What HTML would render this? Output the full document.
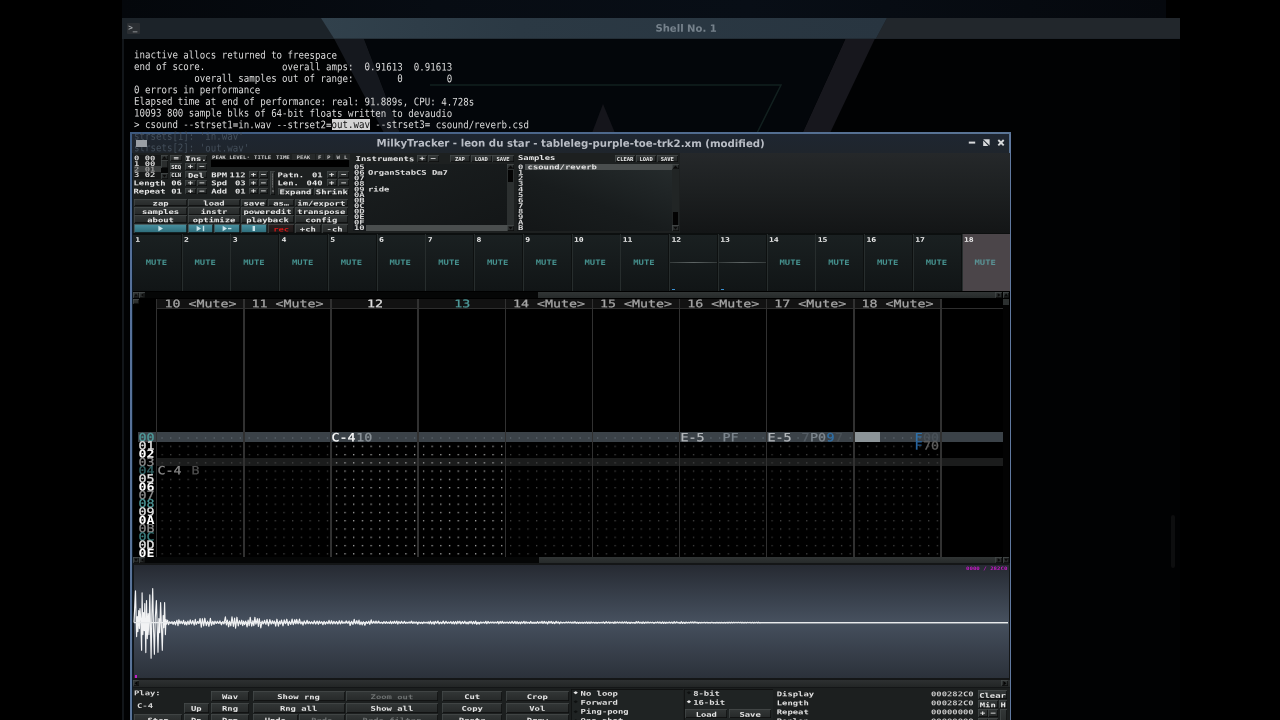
<!DOCTYPE html>
<html><head><meta charset="utf-8"><title>MilkyTracker</title>
<style>
html,body{margin:0;padding:0;background:#000;}
body{width:1280px;height:720px;position:relative;overflow:hidden;font-family:"DejaVu Sans Mono","Liberation Mono",monospace;}
#r{will-change:transform;position:absolute;left:0;top:0;width:1280px;height:720px;}
#r div,#r span,#r svg{position:absolute;}
#r span{left:0;top:0;white-space:pre;transform-origin:0 0;font-size:20px;line-height:20px;}
.m{font-family:"DejaVu Sans Mono","Liberation Mono",monospace;font-weight:normal;}
.b{font-family:"DejaVu Sans Mono","Liberation Mono",monospace;font-weight:bold;}
.p{font-family:"DejaVu Sans Mono","Liberation Mono",monospace;font-weight:normal;-webkit-text-stroke:0.45px;}
.s{font-family:"DejaVu Sans","Liberation Sans",sans-serif;font-weight:bold;}
</style></head><body><div id="r">
<div style="left:122.00px;top:0.00px;width:1044.00px;height:18.00px;background:linear-gradient(90deg,#04070b,#070c13 30%,#080e16 60%,#05080d);"></div>
<div style="left:122.00px;top:38.00px;width:1058.00px;height:682.00px;background:#010203;"></div>
<div style="left:122.00px;top:38.00px;width:1.50px;height:682.00px;background:#12161a;"></div>
<svg style="left:0;top:0" width="1280" height="720" viewBox="0 0 1280 720"><polygon points="334,38.5 364,38.5 400,133 384,133" fill="#15181e"/><polygon points="845.5,38.5 875,38.5 830,133 802.5,133" fill="#17171d"/><polygon points="364,38.5 845.5,38.5 802.5,133 400,133" fill="#03060a"/><polyline points="430,85 781,85 757,133" fill="none" stroke="#12201f" stroke-width="1.5"/><polygon points="603,104 592,133 615,133" fill="#15151b"/></svg>
<div style="left:1170.50px;top:515.00px;width:4.00px;height:53.00px;background:#0d0e0f;border-radius:2px;"></div>
<div style="left:122.00px;top:18.00px;width:1058.00px;height:20.50px;background:#1c2329;"></div>
<svg style="left:0;top:0" width="1280" height="720" viewBox="0 0 1280 720"><defs><linearGradient id="tg" x1="0" x2="1" y1="0" y2="0"><stop offset="0" stop-color="#31414c"/><stop offset="0.35" stop-color="#2b3944"/><stop offset="1" stop-color="#283540"/></linearGradient></defs><polygon points="321,18 887,18 876,38.5 334,38.5" fill="url(#tg)"/><polygon points="876,38.5 887,18 1180,18 1180,38.5" fill="#22272c"/></svg>
<div style="left:127.00px;top:23.00px;width:12.70px;height:10.50px;background:#2b2f33;border-radius:1px;"></div>
<span class="b" style="color:#a0a4a8;transform:translate(128.20px,23.37px) scale(0.3821,0.4115) rotate(0.1deg);">&gt;_</span>
<span class="s" style="transform:translate(655.5px,21.6px) rotate(0.1deg);color:#76828c;font-size:10.05px;line-height:14px;">Shell No. 1</span>
<span class="m" style="color:#dcdcdc;transform:translate(134.00px,49.42px) scale(0.4556,0.5213) rotate(0.1deg);">inactive allocs returned to freespace</span>
<span class="m" style="color:#dcdcdc;transform:translate(134.00px,61.04px) scale(0.4556,0.5213) rotate(0.1deg);">end of score.              overall amps:  0.91613  0.91613</span>
<span class="m" style="color:#dcdcdc;transform:translate(134.00px,72.66px) scale(0.4556,0.5213) rotate(0.1deg);">           overall samples out of range:        0        0</span>
<span class="m" style="color:#dcdcdc;transform:translate(134.00px,84.28px) scale(0.4556,0.5213) rotate(0.1deg);">0 errors in performance</span>
<span class="m" style="color:#dcdcdc;transform:translate(134.00px,95.90px) scale(0.4556,0.5213) rotate(0.1deg);">Elapsed time at end of performance: real: 91.889s, CPU: 4.728s</span>
<span class="m" style="color:#dcdcdc;transform:translate(134.00px,107.52px) scale(0.4556,0.5213) rotate(0.1deg);">10093 800 sample blks of 64-bit floats written to devaudio</span>
<div style="left:331.50px;top:118.82px;width:38.40px;height:11.50px;background:#d4d4d4;"></div>
<span class="m" style="color:#dcdcdc;transform:translate(134.00px,119.14px) scale(0.4556,0.5213) rotate(0.1deg);">&gt; csound --strset1=in.wav --strset2=</span>
<span class="m" style="color:#101010;transform:translate(331.50px,119.14px) scale(0.4556,0.5213) rotate(0.1deg);">out.wav</span>
<span class="m" style="color:#dcdcdc;transform:translate(369.90px,119.14px) scale(0.4556,0.5213) rotate(0.1deg);"> --strset3= csound/reverb.csd</span>
<div style="left:130.00px;top:132.20px;width:881.20px;height:587.80px;background:linear-gradient(90deg,#3d5a80,#4a658a 40%,#5a7596);"></div>
<div style="left:130.00px;top:134.20px;width:2.30px;height:585.80px;background:linear-gradient(#3d5a80,#55709a 20%,#5a7498);"></div>
<div style="left:1009.50px;top:134.20px;width:1.70px;height:585.80px;background:#6079a0;"></div>
<div style="left:132.30px;top:134.00px;width:877.20px;height:586.00px;background:#0a1824;"></div>
<div style="left:132.30px;top:134.00px;width:877.20px;height:19.00px;background:linear-gradient(#1e2631,#1f252c);"></div>
<span class="m" style="color:#444f5b;transform:translate(134.00px,130.76px) scale(0.4556,0.5213) rotate(0.1deg);">strsets[1]: 'in.wav'</span>
<span class="m" style="color:#444f5b;transform:translate(134.00px,142.38px) scale(0.4556,0.5213) rotate(0.1deg);">strsets[2]: 'out.wav'</span>
<div style="left:135.60px;top:140.00px;width:11.40px;height:6.50px;background:#9a9fa5;"></div>
<span class="s" style="transform:translate(376.6px,136.4px) rotate(0.1deg);color:#b9bdc5;font-size:10.2px;line-height:14px;">MilkyTracker - leon du star - tableleg-purple-toe-trk2.xm (modified)</span>
<svg style="left:960px;top:134px" width="50" height="18" viewBox="960 134 50 18"><rect x="968.8" y="141.6" width="6.4" height="2" fill="#d8dadc"/><polygon points="983.2,139.2 989.6,139.2 989.6,145.6" fill="#d8dadc"/><polygon points="983.2,140.6 983.2,146 988.4,146" fill="#d8dadc"/><path d="M998.3 140 L1003.7 145.4 M1003.7 140 L998.3 145.4" stroke="#d8dadc" stroke-width="1.9" fill="none"/></svg>
<div style="left:133.00px;top:153.00px;width:876.50px;height:567.00px;background:#000;"></div>
<div style="left:133.00px;top:153.00px;width:876.50px;height:81.00px;background:#1d2020;"></div>
<div style="left:680.00px;top:153.00px;width:329.50px;height:81.40px;background:linear-gradient(#25282a,#1c1f20 50%,#131516);"></div>
<div style="left:133.50px;top:154.80px;width:27.30px;height:23.80px;background:#161818;"></div>
<div style="left:133.50px;top:166.20px;width:27.30px;height:5.60px;background:#3a3d3d;"></div>
<span class="b" style="color:#d8d8d8;transform:translate(134.00px,154.76px) scale(0.4427,0.3292) rotate(0.1deg);">0 00</span>
<span class="b" style="color:#d8d8d8;transform:translate(134.00px,160.31px) scale(0.4427,0.3292) rotate(0.1deg);">1 00</span>
<span class="b" style="color:#9a9a9a;transform:translate(134.00px,165.86px) scale(0.4427,0.3292) rotate(0.1deg);">2 01</span>
<span class="b" style="color:#d8d8d8;transform:translate(134.00px,171.41px) scale(0.4427,0.3292) rotate(0.1deg);">3 02</span>
<div style="left:161.20px;top:154.80px;width:6.40px;height:23.80px;background:#050606;"></div>
<div style="left:161.20px;top:154.80px;width:6.40px;height:5.40px;background:linear-gradient(#333737,#262929);box-shadow:inset 0.7px 0.7px 0 #454a4a,inset -0.7px -0.7px 0 #0c0d0d;"></div>
<div style="left:161.20px;top:160.40px;width:6.40px;height:7.80px;background:#2a2d2d;box-shadow:inset 0.7px 0.7px 0 #454a4a,inset -0.7px -0.7px 0 #0c0d0d;"></div>
<div style="left:161.20px;top:173.40px;width:6.40px;height:5.20px;background:linear-gradient(#333737,#262929);box-shadow:inset 0.7px 0.7px 0 #454a4a,inset -0.7px -0.7px 0 #0c0d0d;"></div>
<svg style="left:161px;top:154px" width="8" height="26" viewBox="161 154 8 26"><polygon points="164.4,156.2 166.4,158.8 162.4,158.8" fill="#0a0a0a"/><polygon points="164.4,177.4 166.4,174.8 162.4,174.8" fill="#0a0a0a"/></svg>
<div style="left:170.40px;top:155.00px;width:11.60px;height:6.40px;background:linear-gradient(#333737,#262929);box-shadow:inset 0.7px 0.7px 0 #454a4a,inset -0.7px -0.7px 0 #0c0d0d;"></div>
<span class="b" style="color:#e6e6e6;transform:translate(173.53px,154.82px) scale(0.4427,0.3224) rotate(0.1deg);">=</span>
<div style="left:170.40px;top:163.00px;width:11.60px;height:6.50px;background:linear-gradient(#333737,#262929);box-shadow:inset 0.7px 0.7px 0 #454a4a,inset -0.7px -0.7px 0 #0c0d0d;"></div>
<span class="b" style="color:#e6e6e6;transform:translate(171.25px,164.72px) scale(0.2741,0.2332) rotate(0.1deg);">SEQ</span>
<div style="left:170.40px;top:171.60px;width:11.60px;height:6.20px;background:linear-gradient(#333737,#262929);box-shadow:inset 0.7px 0.7px 0 #454a4a,inset -0.7px -0.7px 0 #0c0d0d;"></div>
<span class="b" style="color:#e6e6e6;transform:translate(171.25px,173.17px) scale(0.2741,0.2332) rotate(0.1deg);">CLN</span>
<div style="left:185.00px;top:154.50px;width:22.00px;height:6.90px;background:linear-gradient(#333737,#262929);box-shadow:inset 0.7px 0.7px 0 #454a4a,inset -0.7px -0.7px 0 #0c0d0d;"></div>
<span class="b" style="color:#e6e6e6;transform:translate(185.34px,155.57px) scale(0.4427,0.3224) rotate(0.1deg);">Ins.</span>
<div style="left:185.00px;top:163.00px;width:10.60px;height:6.60px;background:linear-gradient(#333737,#262929);box-shadow:inset 0.7px 0.7px 0 #454a4a,inset -0.7px -0.7px 0 #0c0d0d;"></div>
<span class="b" style="color:#e6e6e6;transform:translate(187.64px,162.92px) scale(0.4427,0.3224) rotate(0.1deg);">+</span>
<div style="left:196.60px;top:163.00px;width:10.40px;height:6.60px;background:linear-gradient(#333737,#262929);box-shadow:inset 0.7px 0.7px 0 #454a4a,inset -0.7px -0.7px 0 #0c0d0d;"></div>
<span class="b" style="color:#e6e6e6;transform:translate(199.14px,162.92px) scale(0.4427,0.3224) rotate(0.1deg);">−</span>
<div style="left:185.00px;top:171.40px;width:22.00px;height:6.60px;background:linear-gradient(#333737,#262929);box-shadow:inset 0.7px 0.7px 0 #454a4a,inset -0.7px -0.7px 0 #0c0d0d;"></div>
<span class="b" style="color:#e6e6e6;transform:translate(188.00px,172.32px) scale(0.4427,0.3224) rotate(0.1deg);">Del</span>
<span class="b" style="color:#e6e6e6;transform:translate(133.50px,179.76px) scale(0.4427,0.3292) rotate(0.1deg);">Length</span>
<span class="b" style="color:#e6e6e6;transform:translate(171.30px,179.76px) scale(0.4427,0.3292) rotate(0.1deg);">06</span>
<div style="left:185.00px;top:179.50px;width:10.60px;height:6.80px;background:linear-gradient(#333737,#262929);box-shadow:inset 0.7px 0.7px 0 #454a4a,inset -0.7px -0.7px 0 #0c0d0d;"></div>
<span class="b" style="color:#e6e6e6;transform:translate(187.64px,179.52px) scale(0.4427,0.3224) rotate(0.1deg);">+</span>
<div style="left:196.60px;top:179.50px;width:10.40px;height:6.80px;background:linear-gradient(#333737,#262929);box-shadow:inset 0.7px 0.7px 0 #454a4a,inset -0.7px -0.7px 0 #0c0d0d;"></div>
<span class="b" style="color:#e6e6e6;transform:translate(199.14px,179.52px) scale(0.4427,0.3224) rotate(0.1deg);">−</span>
<span class="b" style="color:#e6e6e6;transform:translate(133.50px,187.96px) scale(0.4427,0.3292) rotate(0.1deg);">Repeat</span>
<span class="b" style="color:#e6e6e6;transform:translate(171.30px,187.96px) scale(0.4427,0.3292) rotate(0.1deg);">01</span>
<div style="left:185.00px;top:187.60px;width:10.60px;height:6.90px;background:linear-gradient(#333737,#262929);box-shadow:inset 0.7px 0.7px 0 #454a4a,inset -0.7px -0.7px 0 #0c0d0d;"></div>
<span class="b" style="color:#e6e6e6;transform:translate(187.64px,187.67px) scale(0.4427,0.3224) rotate(0.1deg);">+</span>
<div style="left:196.60px;top:187.60px;width:10.40px;height:6.90px;background:linear-gradient(#333737,#262929);box-shadow:inset 0.7px 0.7px 0 #454a4a,inset -0.7px -0.7px 0 #0c0d0d;"></div>
<span class="b" style="color:#e6e6e6;transform:translate(199.14px,187.67px) scale(0.4427,0.3224) rotate(0.1deg);">−</span>
<span class="b" style="color:#d0d0d0;transform:translate(212.00px,154.34px) scale(0.2865,0.2469) rotate(0.1deg);">PEAK LEVEL</span>
<span class="b" style="color:#d0d0d0;transform:translate(246.60px,154.34px) scale(0.2865,0.2469) rotate(0.1deg);">·</span>
<span class="b" style="color:#d0d0d0;transform:translate(254.00px,154.34px) scale(0.2865,0.2469) rotate(0.1deg);">TITLE</span>
<span class="b" style="color:#d0d0d0;transform:translate(276.00px,154.34px) scale(0.2865,0.2469) rotate(0.1deg);">TIME</span>
<div style="left:291.50px;top:154.20px;width:23.00px;height:5.40px;background:#272a2a;"></div>
<span class="b" style="color:#c0c0c0;transform:translate(296.50px,154.64px) scale(0.2865,0.2469) rotate(0.1deg);">PEAK</span>
<div style="left:316.40px;top:154.20px;width:7.20px;height:5.40px;background:#272a2a;"></div>
<span class="b" style="color:#c0c0c0;transform:translate(318.00px,154.64px) scale(0.2865,0.2469) rotate(0.1deg);">F</span>
<div style="left:325.40px;top:154.20px;width:7.20px;height:5.40px;background:#272a2a;"></div>
<span class="b" style="color:#c0c0c0;transform:translate(327.00px,154.64px) scale(0.2865,0.2469) rotate(0.1deg);">P</span>
<div style="left:334.90px;top:154.20px;width:7.20px;height:5.40px;background:#272a2a;"></div>
<span class="b" style="color:#c0c0c0;transform:translate(336.50px,154.64px) scale(0.2865,0.2469) rotate(0.1deg);">W</span>
<div style="left:342.40px;top:154.20px;width:7.20px;height:5.40px;background:#272a2a;"></div>
<span class="b" style="color:#c0c0c0;transform:translate(344.00px,154.64px) scale(0.2865,0.2469) rotate(0.1deg);">L</span>
<div style="left:211.20px;top:160.00px;width:138.30px;height:7.20px;background:#000;"></div>
<span class="b" style="color:#e6e6e6;transform:translate(211.20px,171.56px) scale(0.4427,0.3292) rotate(0.1deg);">BPM</span>
<span class="b" style="color:#e6e6e6;transform:translate(229.60px,171.56px) scale(0.4427,0.3292) rotate(0.1deg);">112</span>
<div style="left:248.80px;top:171.30px;width:9.40px;height:6.80px;background:linear-gradient(#333737,#262929);box-shadow:inset 0.7px 0.7px 0 #454a4a,inset -0.7px -0.7px 0 #0c0d0d;"></div>
<span class="b" style="color:#e6e6e6;transform:translate(250.84px,171.32px) scale(0.4427,0.3224) rotate(0.1deg);">+</span>
<div style="left:259.40px;top:171.30px;width:8.20px;height:6.80px;background:linear-gradient(#333737,#262929);box-shadow:inset 0.7px 0.7px 0 #454a4a,inset -0.7px -0.7px 0 #0c0d0d;"></div>
<span class="b" style="color:#e6e6e6;transform:translate(260.83px,171.32px) scale(0.4427,0.3224) rotate(0.1deg);">−</span>
<span class="b" style="color:#e6e6e6;transform:translate(211.20px,179.71px) scale(0.4427,0.3292) rotate(0.1deg);">Spd</span>
<span class="b" style="color:#e6e6e6;transform:translate(235.00px,179.71px) scale(0.4427,0.3292) rotate(0.1deg);">03</span>
<div style="left:248.80px;top:179.45px;width:9.40px;height:6.80px;background:linear-gradient(#333737,#262929);box-shadow:inset 0.7px 0.7px 0 #454a4a,inset -0.7px -0.7px 0 #0c0d0d;"></div>
<span class="b" style="color:#e6e6e6;transform:translate(250.84px,179.47px) scale(0.4427,0.3224) rotate(0.1deg);">+</span>
<div style="left:259.40px;top:179.45px;width:8.20px;height:6.80px;background:linear-gradient(#333737,#262929);box-shadow:inset 0.7px 0.7px 0 #454a4a,inset -0.7px -0.7px 0 #0c0d0d;"></div>
<span class="b" style="color:#e6e6e6;transform:translate(260.83px,179.47px) scale(0.4427,0.3224) rotate(0.1deg);">−</span>
<span class="b" style="color:#e6e6e6;transform:translate(211.20px,187.86px) scale(0.4427,0.3292) rotate(0.1deg);">Add</span>
<span class="b" style="color:#e6e6e6;transform:translate(235.00px,187.86px) scale(0.4427,0.3292) rotate(0.1deg);">01</span>
<div style="left:248.80px;top:187.60px;width:9.40px;height:6.80px;background:linear-gradient(#333737,#262929);box-shadow:inset 0.7px 0.7px 0 #454a4a,inset -0.7px -0.7px 0 #0c0d0d;"></div>
<span class="b" style="color:#e6e6e6;transform:translate(250.84px,187.62px) scale(0.4427,0.3224) rotate(0.1deg);">+</span>
<div style="left:259.40px;top:187.60px;width:8.20px;height:6.80px;background:linear-gradient(#333737,#262929);box-shadow:inset 0.7px 0.7px 0 #454a4a,inset -0.7px -0.7px 0 #0c0d0d;"></div>
<span class="b" style="color:#e6e6e6;transform:translate(260.83px,187.62px) scale(0.4427,0.3224) rotate(0.1deg);">−</span>
<div style="left:269.60px;top:171.40px;width:5.60px;height:23.20px;background:linear-gradient(#333737,#262929);box-shadow:inset 0.7px 0.7px 0 #454a4a,inset -0.7px -0.7px 0 #0c0d0d;"></div>
<span class="b" style="color:#b8b8b8;transform:translate(274.4px,173.2px) rotate(90deg) scale(0.2,0.15);">~~~~~~ &gt;</span>
<span class="b" style="color:#e6e6e6;transform:translate(277.50px,171.56px) scale(0.4427,0.3292) rotate(0.1deg);">Patn.</span>
<span class="b" style="color:#e6e6e6;transform:translate(312.00px,171.56px) scale(0.4427,0.3292) rotate(0.1deg);">01</span>
<div style="left:326.60px;top:171.30px;width:10.40px;height:6.80px;background:linear-gradient(#333737,#262929);box-shadow:inset 0.7px 0.7px 0 #454a4a,inset -0.7px -0.7px 0 #0c0d0d;"></div>
<span class="b" style="color:#e6e6e6;transform:translate(329.13px,171.32px) scale(0.4427,0.3224) rotate(0.1deg);">+</span>
<div style="left:338.00px;top:171.30px;width:11.40px;height:6.80px;background:linear-gradient(#333737,#262929);box-shadow:inset 0.7px 0.7px 0 #454a4a,inset -0.7px -0.7px 0 #0c0d0d;"></div>
<span class="b" style="color:#e6e6e6;transform:translate(341.03px,171.32px) scale(0.4427,0.3224) rotate(0.1deg);">−</span>
<span class="b" style="color:#e6e6e6;transform:translate(277.50px,179.71px) scale(0.4427,0.3292) rotate(0.1deg);">Len.</span>
<span class="b" style="color:#e6e6e6;transform:translate(306.60px,179.71px) scale(0.4427,0.3292) rotate(0.1deg);">040</span>
<div style="left:326.60px;top:179.45px;width:10.40px;height:6.80px;background:linear-gradient(#333737,#262929);box-shadow:inset 0.7px 0.7px 0 #454a4a,inset -0.7px -0.7px 0 #0c0d0d;"></div>
<span class="b" style="color:#e6e6e6;transform:translate(329.13px,179.47px) scale(0.4427,0.3224) rotate(0.1deg);">+</span>
<div style="left:338.00px;top:179.45px;width:11.40px;height:6.80px;background:linear-gradient(#333737,#262929);box-shadow:inset 0.7px 0.7px 0 #454a4a,inset -0.7px -0.7px 0 #0c0d0d;"></div>
<span class="b" style="color:#e6e6e6;transform:translate(341.03px,179.47px) scale(0.4427,0.3224) rotate(0.1deg);">−</span>
<div style="left:277.50px;top:187.60px;width:35.90px;height:7.00px;background:linear-gradient(#333737,#262929);box-shadow:inset 0.7px 0.7px 0 #454a4a,inset -0.7px -0.7px 0 #0c0d0d;"></div>
<span class="b" style="color:#e6e6e6;transform:translate(279.46px,188.72px) scale(0.4427,0.3224) rotate(0.1deg);">Expand</span>
<div style="left:314.20px;top:187.60px;width:35.30px;height:7.00px;background:linear-gradient(#333737,#262929);box-shadow:inset 0.7px 0.7px 0 #454a4a,inset -0.7px -0.7px 0 #0c0d0d;"></div>
<span class="b" style="color:#e6e6e6;transform:translate(315.86px,188.72px) scale(0.4427,0.3224) rotate(0.1deg);">Shrink</span>
<div style="left:134.40px;top:198.80px;width:52.30px;height:7.40px;background:linear-gradient(#333737,#262929);box-shadow:inset 0.7px 0.7px 0 #454a4a,inset -0.7px -0.7px 0 #0c0d0d;"></div>
<span class="b" style="color:#e6e6e6;transform:translate(152.56px,200.12px) scale(0.4427,0.3224) rotate(0.1deg);">zap</span>
<div style="left:188.00px;top:198.80px;width:52.00px;height:7.40px;background:linear-gradient(#333737,#262929);box-shadow:inset 0.7px 0.7px 0 #454a4a,inset -0.7px -0.7px 0 #0c0d0d;"></div>
<span class="b" style="color:#e6e6e6;transform:translate(203.34px,200.12px) scale(0.4427,0.3224) rotate(0.1deg);">load</span>
<div style="left:241.00px;top:198.80px;width:26.40px;height:7.40px;background:linear-gradient(#333737,#262929);box-shadow:inset 0.7px 0.7px 0 #454a4a,inset -0.7px -0.7px 0 #0c0d0d;"></div>
<span class="b" style="color:#e6e6e6;transform:translate(243.54px,200.12px) scale(0.4427,0.3224) rotate(0.1deg);">save</span>
<div style="left:268.40px;top:198.80px;width:25.60px;height:7.40px;background:linear-gradient(#333737,#262929);box-shadow:inset 0.7px 0.7px 0 #454a4a,inset -0.7px -0.7px 0 #0c0d0d;"></div>
<span class="b" style="color:#e6e6e6;transform:translate(273.20px,200.12px) scale(0.4427,0.3224) rotate(0.1deg);">as…</span>
<div style="left:295.00px;top:198.80px;width:52.60px;height:7.40px;background:linear-gradient(#333737,#262929);box-shadow:inset 0.7px 0.7px 0 #454a4a,inset -0.7px -0.7px 0 #0c0d0d;"></div>
<span class="b" style="color:#e6e6e6;transform:translate(297.31px,200.12px) scale(0.4427,0.3224) rotate(0.1deg);">im/export</span>
<div style="left:134.40px;top:207.00px;width:52.30px;height:7.60px;background:linear-gradient(#333737,#262929);box-shadow:inset 0.7px 0.7px 0 #454a4a,inset -0.7px -0.7px 0 #0c0d0d;"></div>
<span class="b" style="color:#e6e6e6;transform:translate(141.90px,208.42px) scale(0.4427,0.3224) rotate(0.1deg);">samples</span>
<div style="left:188.00px;top:207.00px;width:52.00px;height:7.60px;background:linear-gradient(#333737,#262929);box-shadow:inset 0.7px 0.7px 0 #454a4a,inset -0.7px -0.7px 0 #0c0d0d;"></div>
<span class="b" style="color:#e6e6e6;transform:translate(200.68px,208.42px) scale(0.4427,0.3224) rotate(0.1deg);">instr</span>
<div style="left:241.00px;top:207.00px;width:53.00px;height:7.60px;background:linear-gradient(#333737,#262929);box-shadow:inset 0.7px 0.7px 0 #454a4a,inset -0.7px -0.7px 0 #0c0d0d;"></div>
<span class="b" style="color:#e6e6e6;transform:translate(243.51px,208.42px) scale(0.4427,0.3224) rotate(0.1deg);">poweredit</span>
<div style="left:295.00px;top:207.00px;width:52.60px;height:7.60px;background:linear-gradient(#333737,#262929);box-shadow:inset 0.7px 0.7px 0 #454a4a,inset -0.7px -0.7px 0 #0c0d0d;"></div>
<span class="b" style="color:#e6e6e6;transform:translate(297.31px,208.42px) scale(0.4427,0.3224) rotate(0.1deg);">transpose</span>
<div style="left:134.40px;top:215.40px;width:52.30px;height:7.40px;background:linear-gradient(#333737,#262929);box-shadow:inset 0.7px 0.7px 0 #454a4a,inset -0.7px -0.7px 0 #0c0d0d;"></div>
<span class="b" style="color:#e6e6e6;transform:translate(147.23px,216.72px) scale(0.4427,0.3224) rotate(0.1deg);">about</span>
<div style="left:188.00px;top:215.40px;width:52.00px;height:7.40px;background:linear-gradient(#333737,#262929);box-shadow:inset 0.7px 0.7px 0 #454a4a,inset -0.7px -0.7px 0 #0c0d0d;"></div>
<span class="b" style="color:#e6e6e6;transform:translate(192.68px,216.72px) scale(0.4427,0.3224) rotate(0.1deg);">optimize</span>
<div style="left:241.00px;top:215.40px;width:53.00px;height:7.40px;background:linear-gradient(#333737,#262929);box-shadow:inset 0.7px 0.7px 0 #454a4a,inset -0.7px -0.7px 0 #0c0d0d;"></div>
<span class="b" style="color:#e6e6e6;transform:translate(246.18px,216.72px) scale(0.4427,0.3224) rotate(0.1deg);">playback</span>
<div style="left:295.00px;top:215.40px;width:52.60px;height:7.40px;background:linear-gradient(#333737,#262929);box-shadow:inset 0.7px 0.7px 0 #454a4a,inset -0.7px -0.7px 0 #0c0d0d;"></div>
<span class="b" style="color:#e6e6e6;transform:translate(305.31px,216.72px) scale(0.4427,0.3224) rotate(0.1deg);">config</span>
<div style="left:134.40px;top:223.80px;width:52.30px;height:9.40px;background:linear-gradient(#4a93a2,#2c6a78);box-shadow:inset 0.7px 0.7px 0 #454a4a,inset -0.7px -0.7px 0 #0c0d0d;"></div>
<div style="left:188.00px;top:223.80px;width:25.00px;height:9.40px;background:linear-gradient(#4a93a2,#2c6a78);box-shadow:inset 0.7px 0.7px 0 #454a4a,inset -0.7px -0.7px 0 #0c0d0d;"></div>
<div style="left:214.00px;top:223.80px;width:26.00px;height:9.40px;background:linear-gradient(#4a93a2,#2c6a78);box-shadow:inset 0.7px 0.7px 0 #454a4a,inset -0.7px -0.7px 0 #0c0d0d;"></div>
<div style="left:241.00px;top:223.80px;width:26.40px;height:9.40px;background:linear-gradient(#4a93a2,#2c6a78);box-shadow:inset 0.7px 0.7px 0 #454a4a,inset -0.7px -0.7px 0 #0c0d0d;"></div>
<div style="left:268.40px;top:223.80px;width:25.60px;height:9.40px;background:linear-gradient(#2a2020,#1c1818);box-shadow:inset 0.7px 0.7px 0 #454a4a,inset -0.7px -0.7px 0 #0c0d0d;"></div>
<span class="b" style="color:#d81818;transform:translate(273.20px,226.12px) scale(0.4427,0.3224) rotate(0.1deg);">rec</span>
<div style="left:295.00px;top:223.80px;width:25.60px;height:9.40px;background:linear-gradient(#333737,#262929);box-shadow:inset 0.7px 0.7px 0 #454a4a,inset -0.7px -0.7px 0 #0c0d0d;"></div>
<span class="b" style="color:#e6e6e6;transform:translate(299.81px,226.12px) scale(0.4427,0.3224) rotate(0.1deg);">+ch</span>
<div style="left:321.60px;top:223.80px;width:26.00px;height:9.40px;background:linear-gradient(#333737,#262929);box-shadow:inset 0.7px 0.7px 0 #454a4a,inset -0.7px -0.7px 0 #0c0d0d;"></div>
<span class="b" style="color:#e6e6e6;transform:translate(326.61px,226.12px) scale(0.4427,0.3224) rotate(0.1deg);">-ch</span>
<svg style="left:134px;top:223px" width="140" height="11" viewBox="134 223 140 11"><polygon points="158.4,225.8 158.4,231.2 163,228.5" fill="#c8e4ea"/><polygon points="196.6,225.8 196.6,231.2 201,228.5" fill="#c8e4ea"/><rect x="202.8" y="225.8" width="1.4" height="5.4" fill="#c8e4ea"/><polygon points="222.6,225.8 222.6,231.2 227,228.5" fill="#c8e4ea"/><rect x="228" y="227.9" width="3.4" height="1.3" fill="#c8e4ea"/><rect x="252.6" y="226" width="2.4" height="5" fill="#c8e4ea"/></svg>
<span class="b" style="color:#e6e6e6;transform:translate(355.60px,155.46px) scale(0.4427,0.3292) rotate(0.1deg);">Instruments</span>
<div style="left:417.00px;top:154.60px;width:10.20px;height:7.40px;background:linear-gradient(#333737,#262929);box-shadow:inset 0.7px 0.7px 0 #454a4a,inset -0.7px -0.7px 0 #0c0d0d;"></div>
<span class="b" style="color:#e6e6e6;transform:translate(419.44px,154.92px) scale(0.4427,0.3224) rotate(0.1deg);">+</span>
<div style="left:428.00px;top:154.60px;width:10.60px;height:7.40px;background:linear-gradient(#333737,#262929);box-shadow:inset 0.7px 0.7px 0 #454a4a,inset -0.7px -0.7px 0 #0c0d0d;"></div>
<span class="b" style="color:#e6e6e6;transform:translate(430.63px,154.92px) scale(0.4427,0.3224) rotate(0.1deg);">−</span>
<div style="left:449.70px;top:155.00px;width:20.50px;height:7.20px;background:linear-gradient(#333737,#262929);box-shadow:inset 0.7px 0.7px 0 #454a4a,inset -0.7px -0.7px 0 #0c0d0d;"></div>
<span class="b" style="color:#e6e6e6;transform:translate(455.00px,157.07px) scale(0.2741,0.2332) rotate(0.1deg);">ZAP</span>
<div style="left:471.00px;top:155.00px;width:20.60px;height:7.20px;background:linear-gradient(#333737,#262929);box-shadow:inset 0.7px 0.7px 0 #454a4a,inset -0.7px -0.7px 0 #0c0d0d;"></div>
<span class="b" style="color:#e6e6e6;transform:translate(474.70px,157.07px) scale(0.2741,0.2332) rotate(0.1deg);">LOAD</span>
<div style="left:492.40px;top:155.00px;width:21.20px;height:7.20px;background:linear-gradient(#333737,#262929);box-shadow:inset 0.7px 0.7px 0 #454a4a,inset -0.7px -0.7px 0 #0c0d0d;"></div>
<span class="b" style="color:#e6e6e6;transform:translate(496.40px,157.07px) scale(0.2741,0.2332) rotate(0.1deg);">SAVE</span>
<div style="left:353.40px;top:164.00px;width:153.80px;height:66.60px;background:#15181a;"></div>
<div style="left:366.00px;top:164.00px;width:141.20px;height:66.60px;background:linear-gradient(160deg,#1a1e1f,#131617);"></div>
<div style="left:366.00px;top:225.00px;width:141.20px;height:5.60px;background:#4a4e4e;"></div>
<span class="b" style="color:#d8d8d8;transform:translate(354.00px,163.66px) scale(0.4427,0.3292) rotate(0.1deg);">05</span>
<span class="b" style="color:#d8d8d8;transform:translate(354.00px,169.19px) scale(0.4427,0.3292) rotate(0.1deg);">06</span>
<span class="b" style="color:#e0e0e0;transform:translate(368.00px,169.19px) scale(0.4427,0.3292) rotate(0.1deg);">OrganStabCS Dm7</span>
<span class="b" style="color:#d8d8d8;transform:translate(354.00px,174.72px) scale(0.4427,0.3292) rotate(0.1deg);">07</span>
<span class="b" style="color:#d8d8d8;transform:translate(354.00px,180.25px) scale(0.4427,0.3292) rotate(0.1deg);">08</span>
<span class="b" style="color:#d8d8d8;transform:translate(354.00px,185.78px) scale(0.4427,0.3292) rotate(0.1deg);">09</span>
<span class="b" style="color:#e0e0e0;transform:translate(368.00px,185.78px) scale(0.4427,0.3292) rotate(0.1deg);">ride</span>
<span class="b" style="color:#d8d8d8;transform:translate(354.00px,191.31px) scale(0.4427,0.3292) rotate(0.1deg);">0A</span>
<span class="b" style="color:#d8d8d8;transform:translate(354.00px,196.84px) scale(0.4427,0.3292) rotate(0.1deg);">0B</span>
<span class="b" style="color:#d8d8d8;transform:translate(354.00px,202.37px) scale(0.4427,0.3292) rotate(0.1deg);">0C</span>
<span class="b" style="color:#d8d8d8;transform:translate(354.00px,207.90px) scale(0.4427,0.3292) rotate(0.1deg);">0D</span>
<span class="b" style="color:#d8d8d8;transform:translate(354.00px,213.43px) scale(0.4427,0.3292) rotate(0.1deg);">0E</span>
<span class="b" style="color:#d8d8d8;transform:translate(354.00px,218.96px) scale(0.4427,0.3292) rotate(0.1deg);">0F</span>
<span class="b" style="color:#d8d8d8;transform:translate(354.00px,224.49px) scale(0.4427,0.3292) rotate(0.1deg);">10</span>
<div style="left:507.40px;top:164.00px;width:6.40px;height:66.60px;background:#2c3030;"></div>
<div style="left:507.40px;top:164.00px;width:6.40px;height:5.20px;background:linear-gradient(#333737,#262929);box-shadow:inset 0.7px 0.7px 0 #454a4a,inset -0.7px -0.7px 0 #0c0d0d;"></div>
<div style="left:507.40px;top:225.40px;width:6.40px;height:5.20px;background:linear-gradient(#333737,#262929);box-shadow:inset 0.7px 0.7px 0 #454a4a,inset -0.7px -0.7px 0 #0c0d0d;"></div>
<div style="left:507.80px;top:169.60px;width:5.60px;height:12.80px;background:#030303;"></div>
<svg style="left:507px;top:164px" width="8" height="68" viewBox="507 164 8 68"><polygon points="510.6,165.4 512.8,168 508.4,168" fill="#0a0a0a"/><polygon points="510.6,229.4 512.8,226.8 508.4,226.8" fill="#0a0a0a"/></svg>
<span class="b" style="color:#e6e6e6;transform:translate(518.00px,154.46px) scale(0.4427,0.3292) rotate(0.1deg);">Samples</span>
<div style="left:615.00px;top:155.00px;width:20.20px;height:7.20px;background:linear-gradient(#333737,#262929);box-shadow:inset 0.7px 0.7px 0 #454a4a,inset -0.7px -0.7px 0 #0c0d0d;"></div>
<span class="b" style="color:#e6e6e6;transform:translate(616.85px,157.07px) scale(0.2741,0.2332) rotate(0.1deg);">CLEAR</span>
<div style="left:636.00px;top:155.00px;width:20.20px;height:7.20px;background:linear-gradient(#333737,#262929);box-shadow:inset 0.7px 0.7px 0 #454a4a,inset -0.7px -0.7px 0 #0c0d0d;"></div>
<span class="b" style="color:#e6e6e6;transform:translate(639.50px,157.07px) scale(0.2741,0.2332) rotate(0.1deg);">LOAD</span>
<div style="left:657.00px;top:155.00px;width:20.60px;height:7.20px;background:linear-gradient(#333737,#262929);box-shadow:inset 0.7px 0.7px 0 #454a4a,inset -0.7px -0.7px 0 #0c0d0d;"></div>
<span class="b" style="color:#e6e6e6;transform:translate(660.70px,157.07px) scale(0.2741,0.2332) rotate(0.1deg);">SAVE</span>
<div style="left:516.80px;top:164.00px;width:155.20px;height:66.60px;background:linear-gradient(200deg,#262c2d,#181c1d 55%,#131617);"></div>
<div style="left:525.00px;top:164.00px;width:147.00px;height:5.60px;background:#4a4e4e;"></div>
<span class="b" style="color:#d8d8d8;transform:translate(518.00px,163.66px) scale(0.4427,0.3292) rotate(0.1deg);">0</span>
<span class="b" style="color:#d8d8d8;transform:translate(518.00px,169.19px) scale(0.4427,0.3292) rotate(0.1deg);">1</span>
<span class="b" style="color:#d8d8d8;transform:translate(518.00px,174.72px) scale(0.4427,0.3292) rotate(0.1deg);">2</span>
<span class="b" style="color:#d8d8d8;transform:translate(518.00px,180.25px) scale(0.4427,0.3292) rotate(0.1deg);">3</span>
<span class="b" style="color:#d8d8d8;transform:translate(518.00px,185.78px) scale(0.4427,0.3292) rotate(0.1deg);">4</span>
<span class="b" style="color:#d8d8d8;transform:translate(518.00px,191.31px) scale(0.4427,0.3292) rotate(0.1deg);">5</span>
<span class="b" style="color:#d8d8d8;transform:translate(518.00px,196.84px) scale(0.4427,0.3292) rotate(0.1deg);">6</span>
<span class="b" style="color:#d8d8d8;transform:translate(518.00px,202.37px) scale(0.4427,0.3292) rotate(0.1deg);">7</span>
<span class="b" style="color:#d8d8d8;transform:translate(518.00px,207.90px) scale(0.4427,0.3292) rotate(0.1deg);">8</span>
<span class="b" style="color:#d8d8d8;transform:translate(518.00px,213.43px) scale(0.4427,0.3292) rotate(0.1deg);">9</span>
<span class="b" style="color:#d8d8d8;transform:translate(518.00px,218.96px) scale(0.4427,0.3292) rotate(0.1deg);">A</span>
<span class="b" style="color:#d8d8d8;transform:translate(518.00px,224.49px) scale(0.4427,0.3292) rotate(0.1deg);">B</span>
<span class="b" style="color:#e0e0e0;transform:translate(527.60px,163.66px) scale(0.4427,0.3292) rotate(0.1deg);">csound/reverb</span>
<div style="left:672.20px;top:164.00px;width:6.60px;height:66.60px;background:#212525;"></div>
<div style="left:672.20px;top:164.00px;width:6.60px;height:5.20px;background:linear-gradient(#333737,#262929);box-shadow:inset 0.7px 0.7px 0 #454a4a,inset -0.7px -0.7px 0 #0c0d0d;"></div>
<div style="left:672.20px;top:225.40px;width:6.60px;height:5.20px;background:linear-gradient(#333737,#262929);box-shadow:inset 0.7px 0.7px 0 #454a4a,inset -0.7px -0.7px 0 #0c0d0d;"></div>
<div style="left:672.60px;top:212.00px;width:5.80px;height:13.00px;background:#030303;"></div>
<svg style="left:672px;top:164px" width="8" height="68" viewBox="672 164 8 68"><polygon points="675.5,165.4 677.7,168 673.3,168" fill="#0a0a0a"/><polygon points="675.5,229.4 677.7,226.8 673.3,226.8" fill="#0a0a0a"/></svg>
<div style="left:133.00px;top:233.40px;width:876.50px;height:57.60px;background:#0c0f0f;"></div>
<div style="left:133.00px;top:234.60px;width:876.50px;height:56.00px;background:linear-gradient(#1a2021,#111516);"></div>
<span class="b" style="color:#f0f0f0;transform:translate(135.20px,236.29px) scale(0.4070,0.3155) rotate(0.1deg);">1</span>
<span class="b" style="color:#46928f;transform:translate(145.80px,258.79px) scale(0.4427,0.3567) rotate(0.1deg);">MUTE</span>
<div style="left:180.85px;top:234.20px;width:0.80px;height:56.80px;background:#0d1010;"></div>
<div style="left:181.65px;top:234.20px;width:0.90px;height:56.80px;background:#272d2d;"></div>
<span class="b" style="color:#f0f0f0;transform:translate(183.95px,236.29px) scale(0.4070,0.3155) rotate(0.1deg);">2</span>
<span class="b" style="color:#46928f;transform:translate(194.55px,258.79px) scale(0.4427,0.3567) rotate(0.1deg);">MUTE</span>
<div style="left:229.60px;top:234.20px;width:0.80px;height:56.80px;background:#0d1010;"></div>
<div style="left:230.40px;top:234.20px;width:0.90px;height:56.80px;background:#272d2d;"></div>
<span class="b" style="color:#f0f0f0;transform:translate(232.70px,236.29px) scale(0.4070,0.3155) rotate(0.1deg);">3</span>
<span class="b" style="color:#46928f;transform:translate(243.30px,258.79px) scale(0.4427,0.3567) rotate(0.1deg);">MUTE</span>
<div style="left:278.35px;top:234.20px;width:0.80px;height:56.80px;background:#0d1010;"></div>
<div style="left:279.15px;top:234.20px;width:0.90px;height:56.80px;background:#272d2d;"></div>
<span class="b" style="color:#f0f0f0;transform:translate(281.45px,236.29px) scale(0.4070,0.3155) rotate(0.1deg);">4</span>
<span class="b" style="color:#46928f;transform:translate(292.05px,258.79px) scale(0.4427,0.3567) rotate(0.1deg);">MUTE</span>
<div style="left:327.10px;top:234.20px;width:0.80px;height:56.80px;background:#0d1010;"></div>
<div style="left:327.90px;top:234.20px;width:0.90px;height:56.80px;background:#272d2d;"></div>
<span class="b" style="color:#f0f0f0;transform:translate(330.20px,236.29px) scale(0.4070,0.3155) rotate(0.1deg);">5</span>
<span class="b" style="color:#46928f;transform:translate(340.80px,258.79px) scale(0.4427,0.3567) rotate(0.1deg);">MUTE</span>
<div style="left:375.85px;top:234.20px;width:0.80px;height:56.80px;background:#0d1010;"></div>
<div style="left:376.65px;top:234.20px;width:0.90px;height:56.80px;background:#272d2d;"></div>
<span class="b" style="color:#f0f0f0;transform:translate(378.95px,236.29px) scale(0.4070,0.3155) rotate(0.1deg);">6</span>
<span class="b" style="color:#46928f;transform:translate(389.55px,258.79px) scale(0.4427,0.3567) rotate(0.1deg);">MUTE</span>
<div style="left:424.60px;top:234.20px;width:0.80px;height:56.80px;background:#0d1010;"></div>
<div style="left:425.40px;top:234.20px;width:0.90px;height:56.80px;background:#272d2d;"></div>
<span class="b" style="color:#f0f0f0;transform:translate(427.70px,236.29px) scale(0.4070,0.3155) rotate(0.1deg);">7</span>
<span class="b" style="color:#46928f;transform:translate(438.30px,258.79px) scale(0.4427,0.3567) rotate(0.1deg);">MUTE</span>
<div style="left:473.35px;top:234.20px;width:0.80px;height:56.80px;background:#0d1010;"></div>
<div style="left:474.15px;top:234.20px;width:0.90px;height:56.80px;background:#272d2d;"></div>
<span class="b" style="color:#f0f0f0;transform:translate(476.45px,236.29px) scale(0.4070,0.3155) rotate(0.1deg);">8</span>
<span class="b" style="color:#46928f;transform:translate(487.05px,258.79px) scale(0.4427,0.3567) rotate(0.1deg);">MUTE</span>
<div style="left:522.10px;top:234.20px;width:0.80px;height:56.80px;background:#0d1010;"></div>
<div style="left:522.90px;top:234.20px;width:0.90px;height:56.80px;background:#272d2d;"></div>
<span class="b" style="color:#f0f0f0;transform:translate(525.20px,236.29px) scale(0.4070,0.3155) rotate(0.1deg);">9</span>
<span class="b" style="color:#46928f;transform:translate(535.80px,258.79px) scale(0.4427,0.3567) rotate(0.1deg);">MUTE</span>
<div style="left:570.85px;top:234.20px;width:0.80px;height:56.80px;background:#0d1010;"></div>
<div style="left:571.65px;top:234.20px;width:0.90px;height:56.80px;background:#272d2d;"></div>
<span class="b" style="color:#f0f0f0;transform:translate(573.95px,236.29px) scale(0.4070,0.3155) rotate(0.1deg);">10</span>
<span class="b" style="color:#46928f;transform:translate(584.55px,258.79px) scale(0.4427,0.3567) rotate(0.1deg);">MUTE</span>
<div style="left:619.60px;top:234.20px;width:0.80px;height:56.80px;background:#0d1010;"></div>
<div style="left:620.40px;top:234.20px;width:0.90px;height:56.80px;background:#272d2d;"></div>
<span class="b" style="color:#f0f0f0;transform:translate(622.70px,236.29px) scale(0.4070,0.3155) rotate(0.1deg);">11</span>
<span class="b" style="color:#46928f;transform:translate(633.30px,258.79px) scale(0.4427,0.3567) rotate(0.1deg);">MUTE</span>
<div style="left:668.35px;top:234.20px;width:0.80px;height:56.80px;background:#0d1010;"></div>
<div style="left:669.15px;top:234.20px;width:0.90px;height:56.80px;background:#272d2d;"></div>
<span class="b" style="color:#f0f0f0;transform:translate(671.45px,236.29px) scale(0.4070,0.3155) rotate(0.1deg);">12</span>
<div style="left:670.25px;top:261.60px;width:46.75px;height:1.60px;background:linear-gradient(90deg,#343a3a,#5e6565 50%,#343a3a);"></div>
<div style="left:671.85px;top:288.60px;width:3.40px;height:1.60px;background:#3a8fd0;"></div>
<div style="left:717.10px;top:234.20px;width:0.80px;height:56.80px;background:#0d1010;"></div>
<div style="left:717.90px;top:234.20px;width:0.90px;height:56.80px;background:#272d2d;"></div>
<span class="b" style="color:#f0f0f0;transform:translate(720.20px,236.29px) scale(0.4070,0.3155) rotate(0.1deg);">13</span>
<div style="left:719.00px;top:261.60px;width:46.75px;height:1.60px;background:linear-gradient(90deg,#343a3a,#5e6565 50%,#343a3a);"></div>
<div style="left:720.60px;top:288.60px;width:3.40px;height:1.60px;background:#3a8fd0;"></div>
<div style="left:765.85px;top:234.20px;width:0.80px;height:56.80px;background:#0d1010;"></div>
<div style="left:766.65px;top:234.20px;width:0.90px;height:56.80px;background:#272d2d;"></div>
<span class="b" style="color:#f0f0f0;transform:translate(768.95px,236.29px) scale(0.4070,0.3155) rotate(0.1deg);">14</span>
<span class="b" style="color:#46928f;transform:translate(779.55px,258.79px) scale(0.4427,0.3567) rotate(0.1deg);">MUTE</span>
<div style="left:814.60px;top:234.20px;width:0.80px;height:56.80px;background:#0d1010;"></div>
<div style="left:815.40px;top:234.20px;width:0.90px;height:56.80px;background:#272d2d;"></div>
<span class="b" style="color:#f0f0f0;transform:translate(817.70px,236.29px) scale(0.4070,0.3155) rotate(0.1deg);">15</span>
<span class="b" style="color:#46928f;transform:translate(828.30px,258.79px) scale(0.4427,0.3567) rotate(0.1deg);">MUTE</span>
<div style="left:863.35px;top:234.20px;width:0.80px;height:56.80px;background:#0d1010;"></div>
<div style="left:864.15px;top:234.20px;width:0.90px;height:56.80px;background:#272d2d;"></div>
<span class="b" style="color:#f0f0f0;transform:translate(866.45px,236.29px) scale(0.4070,0.3155) rotate(0.1deg);">16</span>
<span class="b" style="color:#46928f;transform:translate(877.05px,258.79px) scale(0.4427,0.3567) rotate(0.1deg);">MUTE</span>
<div style="left:912.10px;top:234.20px;width:0.80px;height:56.80px;background:#0d1010;"></div>
<div style="left:912.90px;top:234.20px;width:0.90px;height:56.80px;background:#272d2d;"></div>
<span class="b" style="color:#f0f0f0;transform:translate(915.20px,236.29px) scale(0.4070,0.3155) rotate(0.1deg);">17</span>
<span class="b" style="color:#46928f;transform:translate(925.80px,258.79px) scale(0.4427,0.3567) rotate(0.1deg);">MUTE</span>
<div style="left:961.75px;top:234.20px;width:47.75px;height:56.80px;background:#4b4549;"></div>
<div style="left:960.85px;top:234.20px;width:0.80px;height:56.80px;background:#0d1010;"></div>
<div style="left:961.65px;top:234.20px;width:0.90px;height:56.80px;background:#272d2d;"></div>
<span class="b" style="color:#f0f0f0;transform:translate(963.95px,236.29px) scale(0.4070,0.3155) rotate(0.1deg);">18</span>
<span class="b" style="color:#5a9496;transform:translate(974.55px,258.79px) scale(0.4427,0.3567) rotate(0.1deg);">MUTE</span>
<div style="left:133.00px;top:291.60px;width:876.50px;height:271.80px;background:#000;"></div>
<div style="left:133.00px;top:291.80px;width:862.00px;height:6.40px;background:#050606;"></div>
<div style="left:538.00px;top:291.80px;width:457.00px;height:6.40px;background:linear-gradient(#313535,#262a2a);"></div>
<div style="left:995.20px;top:291.80px;width:7.20px;height:6.40px;background:linear-gradient(#333737,#262929);box-shadow:inset 0.7px 0.7px 0 #454a4a,inset -0.7px -0.7px 0 #0c0d0d;"></div>
<div style="left:1002.80px;top:291.80px;width:6.60px;height:6.40px;background:linear-gradient(#333737,#262929);box-shadow:inset 0.7px 0.7px 0 #454a4a,inset -0.7px -0.7px 0 #0c0d0d;"></div>
<div style="left:133.00px;top:291.80px;width:6.00px;height:6.20px;background:linear-gradient(#333737,#262929);box-shadow:inset 0.7px 0.7px 0 #454a4a,inset -0.7px -0.7px 0 #0c0d0d;"></div>
<div style="left:139.40px;top:291.80px;width:6.00px;height:6.20px;background:linear-gradient(#333737,#262929);box-shadow:inset 0.7px 0.7px 0 #454a4a,inset -0.7px -0.7px 0 #0c0d0d;"></div>
<div style="left:133.00px;top:298.80px;width:5.60px;height:4.80px;background:linear-gradient(#333737,#262929);box-shadow:inset 0.7px 0.7px 0 #454a4a,inset -0.7px -0.7px 0 #0c0d0d;"></div>
<svg style="left:132px;top:291px" width="880" height="14" viewBox="132 291 880 14"><polygon points="136,293.4 138,296.4 134,296.4" fill="#0a0a0a"/><polygon points="141,295 143.6,293 143.6,297" fill="#0a0a0a"/><polygon points="1000.4,295 997.6,293 997.6,297" fill="#0a0a0a"/><polygon points="1006.1,293.2 1008.2,296.4 1004,296.4" fill="#0a0a0a"/></svg>
<div style="left:1003.00px;top:298.60px;width:6.40px;height:258.00px;background:#030303;"></div>
<div style="left:1003.00px;top:298.60px;width:6.40px;height:6.00px;background:#2c3030;"></div>
<div style="left:156.80px;top:298.80px;width:783.80px;height:9.20px;background:#121212;"></div>
<div style="left:156.80px;top:308.00px;width:846.20px;height:1.20px;background:#2e2e2e;"></div>
<span class="p" style="color:#a6a6a6;transform:translate(164.40px,298.42px) scale(0.6645,0.5213) rotate(0.1deg);">10 &lt;Mute&gt;</span>
<span class="p" style="color:#a6a6a6;transform:translate(251.53px,298.42px) scale(0.6645,0.5213) rotate(0.1deg);">11 &lt;Mute&gt;</span>
<span class="p" style="color:#e0e0e0;transform:translate(367.06px,298.42px) scale(0.6645,0.5213) rotate(0.1deg);">12</span>
<span class="p" style="color:#4f9c9c;transform:translate(454.19px,298.42px) scale(0.6645,0.5213) rotate(0.1deg);">13</span>
<span class="p" style="color:#a6a6a6;transform:translate(512.92px,298.42px) scale(0.6645,0.5213) rotate(0.1deg);">14 &lt;Mute&gt;</span>
<span class="p" style="color:#a6a6a6;transform:translate(600.05px,298.42px) scale(0.6645,0.5213) rotate(0.1deg);">15 &lt;Mute&gt;</span>
<span class="p" style="color:#a6a6a6;transform:translate(687.18px,298.42px) scale(0.6645,0.5213) rotate(0.1deg);">16 &lt;Mute&gt;</span>
<span class="p" style="color:#a6a6a6;transform:translate(774.31px,298.42px) scale(0.6645,0.5213) rotate(0.1deg);">17 &lt;Mute&gt;</span>
<span class="p" style="color:#a6a6a6;transform:translate(861.44px,298.42px) scale(0.6645,0.5213) rotate(0.1deg);">18 &lt;Mute&gt;</span>
<div style="left:138.00px;top:432.40px;width:864.60px;height:9.20px;background:#3b4248;"></div>
<div style="left:156.00px;top:458.01px;width:846.60px;height:8.07px;background:#1b1c1c;"></div>
<div style="left:156.10px;top:298.80px;width:1.40px;height:257.80px;background:#313131;"></div>
<div style="left:243.23px;top:298.80px;width:1.40px;height:257.80px;background:#313131;"></div>
<div style="left:330.36px;top:298.80px;width:1.40px;height:257.80px;background:#313131;"></div>
<div style="left:417.49px;top:298.80px;width:1.40px;height:257.80px;background:#313131;"></div>
<div style="left:504.62px;top:298.80px;width:1.40px;height:257.80px;background:#313131;"></div>
<div style="left:591.75px;top:298.80px;width:1.40px;height:257.80px;background:#313131;"></div>
<div style="left:678.88px;top:298.80px;width:1.40px;height:257.80px;background:#313131;"></div>
<div style="left:766.01px;top:298.80px;width:1.40px;height:257.80px;background:#313131;"></div>
<div style="left:853.14px;top:298.80px;width:1.40px;height:257.80px;background:#313131;"></div>
<div style="left:940.27px;top:298.80px;width:1.40px;height:257.80px;background:#313131;"></div>
<svg style="left:0;top:0" width="1280" height="720" viewBox="0 0 1280 720"><defs><pattern id="pd" x="0" y="445.67" width="8.7" height="8.27" patternUnits="userSpaceOnUse"><rect x="0" y="0" width="1.3" height="1.3" fill="#424242"/></pattern><pattern id="pb" x="0" y="445.67" width="8.7" height="8.27" patternUnits="userSpaceOnUse"><rect x="0" y="0" width="1.3" height="1.3" fill="#a8a8a8"/></pattern></defs><g transform="translate(161.40,0)"><rect x="0" y="444.67" width="80.30" height="115.78" fill="url(#pd)"/><line x1="0" x2="80.30" y1="438.00" y2="438.00" stroke="#59626a" stroke-width="1.3" stroke-dasharray="1.3 7.40"/></g><g transform="translate(248.53,0)"><rect x="0" y="444.67" width="80.30" height="115.78" fill="url(#pd)"/><line x1="0" x2="80.30" y1="438.00" y2="438.00" stroke="#59626a" stroke-width="1.3" stroke-dasharray="1.3 7.40"/></g><g transform="translate(335.66,0)"><rect x="0" y="444.67" width="80.30" height="115.78" fill="url(#pb)"/><line x1="0" x2="80.30" y1="438.00" y2="438.00" stroke="#59626a" stroke-width="1.3" stroke-dasharray="1.3 7.40"/></g><g transform="translate(422.79,0)"><rect x="0" y="444.67" width="80.30" height="115.78" fill="url(#pb)"/><line x1="0" x2="80.30" y1="438.00" y2="438.00" stroke="#59626a" stroke-width="1.3" stroke-dasharray="1.3 7.40"/></g><g transform="translate(509.92,0)"><rect x="0" y="444.67" width="80.30" height="115.78" fill="url(#pd)"/><line x1="0" x2="80.30" y1="438.00" y2="438.00" stroke="#59626a" stroke-width="1.3" stroke-dasharray="1.3 7.40"/></g><g transform="translate(597.05,0)"><rect x="0" y="444.67" width="80.30" height="115.78" fill="url(#pd)"/><line x1="0" x2="80.30" y1="438.00" y2="438.00" stroke="#59626a" stroke-width="1.3" stroke-dasharray="1.3 7.40"/></g><g transform="translate(684.18,0)"><rect x="0" y="444.67" width="80.30" height="115.78" fill="url(#pd)"/><line x1="0" x2="80.30" y1="438.00" y2="438.00" stroke="#59626a" stroke-width="1.3" stroke-dasharray="1.3 7.40"/></g><g transform="translate(771.31,0)"><rect x="0" y="444.67" width="80.30" height="115.78" fill="url(#pd)"/><line x1="0" x2="80.30" y1="438.00" y2="438.00" stroke="#59626a" stroke-width="1.3" stroke-dasharray="1.3 7.40"/></g><g transform="translate(858.44,0)"><rect x="0" y="444.67" width="80.30" height="115.78" fill="url(#pd)"/><line x1="0" x2="80.30" y1="438.00" y2="438.00" stroke="#59626a" stroke-width="1.3" stroke-dasharray="1.3 7.40"/></g></svg>
<div style="left:854.80px;top:432.40px;width:25.00px;height:9.20px;background:#8c9498;"></div>
<span class="p" style="color:#4f9c9c;transform:translate(138.60px,431.63px) scale(0.6645,0.5624) rotate(0.1deg);">00</span>
<span class="p" style="color:#e4e4e4;transform:translate(138.60px,439.90px) scale(0.6645,0.5624) rotate(0.1deg);">01</span>
<span class="b" style="color:#ffffff;transform:translate(138.60px,448.17px) scale(0.6645,0.5624) rotate(0.1deg);">02</span>
<span class="p" style="color:#8c8c8c;transform:translate(138.60px,456.44px) scale(0.6645,0.5624) rotate(0.1deg);">03</span>
<span class="p" style="color:#35686a;transform:translate(138.60px,464.71px) scale(0.6645,0.5624) rotate(0.1deg);">04</span>
<span class="p" style="color:#e4e4e4;transform:translate(138.60px,472.98px) scale(0.6645,0.5624) rotate(0.1deg);">05</span>
<span class="b" style="color:#ffffff;transform:translate(138.60px,481.25px) scale(0.6645,0.5624) rotate(0.1deg);">06</span>
<span class="p" style="color:#8c8c8c;transform:translate(138.60px,489.52px) scale(0.6645,0.5624) rotate(0.1deg);">07</span>
<span class="p" style="color:#4f9c9c;transform:translate(138.60px,497.79px) scale(0.6645,0.5624) rotate(0.1deg);">08</span>
<span class="p" style="color:#e4e4e4;transform:translate(138.60px,506.06px) scale(0.6645,0.5624) rotate(0.1deg);">09</span>
<span class="b" style="color:#ffffff;transform:translate(138.60px,514.33px) scale(0.6645,0.5624) rotate(0.1deg);">0A</span>
<span class="p" style="color:#8c8c8c;transform:translate(138.60px,522.60px) scale(0.6645,0.5624) rotate(0.1deg);">0B</span>
<span class="p" style="color:#3f8384;transform:translate(138.60px,530.87px) scale(0.6645,0.5624) rotate(0.1deg);">0C</span>
<span class="p" style="color:#e4e4e4;transform:translate(138.60px,539.14px) scale(0.6645,0.5624) rotate(0.1deg);">0D</span>
<span class="b" style="color:#ffffff;transform:translate(138.60px,547.41px) scale(0.6645,0.5624) rotate(0.1deg);">0E</span>
<div style="left:157.10px;top:465.78px;width:25.00px;height:9.00px;background:#000;"></div>
<span class="p" style="color:#8c8c8c;transform:translate(157.60px,464.71px) scale(0.6645,0.5624) rotate(0.1deg);">C-4</span>
<div style="left:190.90px;top:465.78px;width:9.00px;height:9.00px;background:#000;"></div>
<span class="p" style="color:#505050;transform:translate(191.40px,464.71px) scale(0.6645,0.5624) rotate(0.1deg);">B</span>
<div style="left:331.10px;top:432.70px;width:25.00px;height:9.00px;background:#3b4248;"></div>
<span class="p" style="color:#ffffff;transform:translate(331.60px,431.63px) scale(0.6645,0.5624) rotate(0.1deg);">C-4</span>
<div style="left:355.70px;top:432.70px;width:17.00px;height:9.00px;background:#3b4248;"></div>
<span class="p" style="color:#8c949a;transform:translate(356.20px,431.63px) scale(0.6645,0.5624) rotate(0.1deg);">10</span>
<div style="left:679.90px;top:432.70px;width:25.00px;height:9.00px;background:#3b4248;"></div>
<span class="p" style="color:#b2b6ba;transform:translate(680.40px,431.63px) scale(0.6645,0.5624) rotate(0.1deg);">E-5</span>
<div style="left:722.10px;top:432.70px;width:17.00px;height:9.00px;background:#3b4248;"></div>
<span class="p" style="color:#7f8890;transform:translate(722.60px,431.63px) scale(0.6645,0.5624) rotate(0.1deg);">PF</span>
<div style="left:766.90px;top:432.70px;width:25.00px;height:9.00px;background:#3b4248;"></div>
<span class="p" style="color:#b2b6ba;transform:translate(767.40px,431.63px) scale(0.6645,0.5624) rotate(0.1deg);">E-5</span>
<div style="left:801.10px;top:432.70px;width:9.00px;height:9.00px;background:#3b4248;"></div>
<span class="p" style="color:#565e66;transform:translate(801.60px,431.63px) scale(0.6645,0.5624) rotate(0.1deg);">7</span>
<div style="left:809.50px;top:432.70px;width:17.00px;height:9.00px;background:#3b4248;"></div>
<span class="p" style="color:#7f8890;transform:translate(810.00px,431.63px) scale(0.6645,0.5624) rotate(0.1deg);">P0</span>
<div style="left:826.10px;top:432.70px;width:9.00px;height:9.00px;background:#3b4248;"></div>
<span class="p" style="color:#2f72ac;transform:translate(826.60px,431.63px) scale(0.6645,0.5624) rotate(0.1deg);">9</span>
<div style="left:834.50px;top:432.70px;width:9.00px;height:9.00px;background:#3b4248;"></div>
<span class="p" style="color:#4a5258;transform:translate(835.00px,431.63px) scale(0.6645,0.5624) rotate(0.1deg);">7</span>
<span class="p" style="color:#2f72ac;transform:translate(914.40px,431.63px) scale(0.6645,0.5624) rotate(0.1deg);">F</span>
<span class="p" style="color:#4b535a;transform:translate(923.00px,431.63px) scale(0.6645,0.5624) rotate(0.1deg);">00</span>
<span class="p" style="color:#2a66a0;transform:translate(914.40px,439.90px) scale(0.6645,0.5624) rotate(0.1deg);">F</span>
<span class="p" style="color:#606060;transform:translate(923.00px,439.90px) scale(0.6645,0.5624) rotate(0.1deg);">70</span>
<div style="left:133.00px;top:556.80px;width:876.50px;height:6.40px;background:#050606;"></div>
<div style="left:539.00px;top:556.80px;width:456.00px;height:6.40px;background:linear-gradient(#313535,#262a2a);"></div>
<div style="left:133.00px;top:557.00px;width:6.00px;height:6.00px;background:linear-gradient(#333737,#262929);box-shadow:inset 0.7px 0.7px 0 #454a4a,inset -0.7px -0.7px 0 #0c0d0d;"></div>
<div style="left:139.40px;top:557.00px;width:6.00px;height:6.00px;background:linear-gradient(#333737,#262929);box-shadow:inset 0.7px 0.7px 0 #454a4a,inset -0.7px -0.7px 0 #0c0d0d;"></div>
<div style="left:995.20px;top:557.00px;width:7.20px;height:6.00px;background:linear-gradient(#333737,#262929);box-shadow:inset 0.7px 0.7px 0 #454a4a,inset -0.7px -0.7px 0 #0c0d0d;"></div>
<div style="left:1002.80px;top:557.00px;width:6.60px;height:6.00px;background:linear-gradient(#333737,#262929);box-shadow:inset 0.7px 0.7px 0 #454a4a,inset -0.7px -0.7px 0 #0c0d0d;"></div>
<svg style="left:132px;top:556px" width="880" height="8" viewBox="132 556 880 8"><polygon points="136,561.6 138,558.6 134,558.6" fill="#0a0a0a"/><polygon points="141,560 143.6,558 143.6,562" fill="#0a0a0a"/><polygon points="1000.4,560 997.6,558 997.6,562" fill="#0a0a0a"/><polygon points="1006.1,561.6 1008.2,558.6 1004,558.6" fill="#0a0a0a"/></svg>
<div style="left:133.00px;top:563.20px;width:876.50px;height:124.80px;background:#141617;"></div>
<div style="left:134.40px;top:565.40px;width:874.20px;height:113.00px;background:linear-gradient(#262a32,#39414d 30%,#46505e 50%,#3a424e 72%,#2b313a);"></div>
<svg style="left:0;top:0" width="1280" height="720" viewBox="0 0 1280 720"><polyline points="134.0,622.6 135.5,590.9 136.6,636.6 137.3,616.6 137.9,631.6 138.7,610.6 139.4,628.6 140.0,608.6 140.8,619.6 141.6,650.3 142.1,592.9 142.9,634.6 143.6,612.6 144.2,630.6 144.8,603.6 145.8,652.6 146.5,600.6 147.3,638.6 148.1,613.6 148.9,634.6 149.8,594.9 151.1,658.2 151.9,614.6 152.7,588.6 153.5,628.6 154.4,654.3 155.3,617.6 156.4,600.6 157.2,626.6 158.0,652.3 158.9,618.6 159.7,632.6 160.6,602.6 161.4,625.6 162.3,650.3 163.2,615.6 163.9,627.6 164.6,602.6 165.4,634.6 166.0,619.6 166.6,624.2 167.6,620.2 168.5,624.7 169.7,621.7 170.9,623.5 172.0,621.6 173.0,624.4 174.4,621.5 175.4,624.9 176.9,620.4 178.0,625.7 178.9,619.7 180.0,623.7 181.0,621.1 182.4,623.8 183.6,620.3 184.7,624.7 185.7,621.7 186.7,625.0 187.9,621.0 189.1,624.5 190.2,619.9 191.5,624.0 192.8,620.5 194.2,625.2 195.3,619.4 196.2,624.4 197.6,621.4 198.8,623.5 200.1,618.5 201.3,627.1 202.4,618.7 203.7,626.0 204.8,618.2 206.3,625.6 207.6,621.1 208.9,626.3 210.4,618.3 211.5,625.3 212.8,621.3 214.0,624.5 214.9,621.1 216.3,623.5 217.3,621.2 218.8,623.4 219.9,620.9 221.4,624.8 222.8,621.5 223.9,623.9 225.4,616.8 226.4,624.9 227.4,620.0 228.6,626.8 229.6,621.1 230.8,625.8 232.0,616.8 233.4,626.4 234.6,618.1 235.6,628.1 236.9,617.2 238.3,625.9 239.4,620.6 240.7,624.4 241.7,620.2 242.7,625.6 243.6,621.1 244.6,624.6 245.7,621.0 247.1,626.9 248.1,620.0 249.2,625.7 250.2,617.3 251.7,626.2 252.9,620.7 253.8,625.6 254.9,617.4 255.9,624.2 257.4,618.7 258.4,626.5 259.3,618.7 260.8,628.0 262.1,621.0 263.2,624.0 264.6,620.3 265.9,624.4 267.0,619.5 268.5,625.8 269.8,619.5 271.2,624.1 272.4,620.7 273.3,623.6 274.4,621.0 275.7,626.1 276.9,619.2 278.4,626.1 279.5,621.1 280.5,624.0 281.5,620.0 283.0,625.8 284.2,619.9 285.5,623.7 286.8,619.2 288.2,625.5 289.4,621.2 290.8,624.4 292.1,619.1 293.3,624.6 294.8,619.7 295.8,623.8 296.7,619.3 298.1,623.9 299.5,619.1 300.8,623.9 302.0,621.7 303.0,625.1 304.2,620.9 305.7,624.1 307.1,620.3 308.2,623.7 309.2,621.5 310.5,623.8 311.6,621.7 313.1,623.9 314.3,620.8 315.7,624.1 317.1,621.0 318.4,624.3 319.3,621.1 320.3,623.3 321.7,621.6 322.9,624.7 324.1,621.3 325.3,624.3 326.7,621.7 327.9,623.7 329.0,620.4 330.2,623.9 331.5,620.7 332.7,624.0 333.9,621.3 335.2,623.8 336.4,621.4 337.9,624.1 339.3,620.7 340.4,623.9 341.8,620.8 342.8,623.3 344.0,622.0 345.0,623.2 346.3,620.9 347.8,623.3 349.1,621.1 350.1,625.5 351.6,621.3 353.0,624.4 354.2,619.4 355.6,623.8 356.8,620.6 357.9,623.9 359.0,620.1 359.9,624.7 361.1,621.8 362.2,624.9 363.4,621.6 364.9,625.3 366.3,621.5 367.4,623.5 368.8,621.2 369.8,624.4 371.2,619.8 372.3,623.3 373.7,621.2 375.0,623.2 376.0,621.1 377.1,623.2 378.6,621.1 380.0,623.2 381.4,622.1 382.8,623.6 383.9,621.5 385.4,623.4 386.3,621.5 387.4,623.2 388.4,622.1 389.4,623.4 390.5,621.2 391.5,623.7 392.6,621.7 393.5,623.3 394.4,621.2 395.6,623.3 396.8,621.0 397.8,624.1 398.9,621.5 400.3,623.5 401.5,621.3 403.0,623.5 404.4,621.3 405.7,623.5 406.8,622.1 407.8,623.1 409.1,621.8 410.1,623.1 411.5,621.1 412.8,623.4 413.9,621.8 415.0,623.2 416.2,621.8 417.7,624.3 418.9,621.9 420.4,623.4 421.5,622.2 422.6,623.6 423.8,621.9 425.0,623.0 426.1,622.1 427.2,623.1 428.2,621.8 429.2,623.8 430.4,621.2 431.7,623.9 433.1,621.7 434.2,624.3 435.2,621.3 436.5,623.1 437.9,621.0 439.2,624.0 440.6,622.0 441.8,623.7 443.2,621.1 444.6,623.8 446.0,621.3 447.3,623.3 448.3,622.0 449.4,623.2 450.8,621.5 452.0,623.8 453.4,621.6 454.3,624.0 455.6,621.5 456.8,623.9 457.8,621.2 458.8,623.1 459.9,621.2 460.9,624.0 462.4,621.5 463.5,623.6 464.8,621.2 466.1,623.8 467.0,622.0 468.1,624.0 469.2,621.5 470.1,623.1 471.1,621.3 472.5,623.9 473.5,621.5 474.7,623.6 475.7,621.0 476.7,624.3 478.2,622.2 479.3,624.1 480.8,621.8 481.9,623.1 483.4,622.1 484.6,623.1 485.8,621.3 486.8,623.7 488.0,621.4 489.3,623.2 490.8,621.8 491.7,622.9 492.9,621.8 494.0,623.1 495.1,622.0 496.5,622.9 497.8,621.5 498.8,623.8 500.1,621.4 501.2,623.3 502.3,621.3 503.6,623.3 504.7,622.0 505.7,623.0 507.1,622.0 508.5,623.2 509.6,621.8 510.6,623.3 512.1,621.4 513.5,623.5 514.9,621.4 516.1,623.6 517.1,621.6 518.2,623.7 519.5,622.0 520.5,623.8 521.4,621.8 522.5,623.2 523.9,621.3 524.9,623.6 526.0,621.7 527.2,623.1 528.1,622.1 529.6,623.4 530.6,621.4 532.1,623.4 533.1,622.1 534.1,623.3 535.0,622.0 536.1,623.5 537.5,621.5 538.6,623.3 539.9,621.9 541.0,623.0 542.0,621.3 543.0,623.4 544.3,621.4 545.3,623.2 546.4,621.9 547.5,623.9 548.9,621.4 549.9,623.0 551.2,621.4 552.4,623.5 553.3,621.9 554.7,623.7 556.1,621.3 557.2,623.0 558.2,621.8 559.5,623.8 560.8,621.9 562.2,623.1 563.4,622.3 564.8,623.0 566.2,621.9 567.3,622.9 568.4,621.9 569.7,622.9 570.6,622.0 571.9,623.1 572.9,622.0 573.8,623.0 575.0,621.7 576.3,623.4 577.5,622.2 578.5,623.5 579.8,622.2 580.7,623.2 582.1,622.1 583.1,623.3 584.6,622.2 585.5,623.1 586.6,621.9 587.7,623.4 589.0,622.0 590.0,623.5 591.1,621.8 592.1,623.0 593.5,622.2 595.0,623.2 596.0,622.2 597.1,623.3 598.6,622.3 599.7,623.0 601.2,622.3 602.2,622.9 603.3,621.8 604.7,623.3 606.2,621.7 607.3,623.0 608.8,621.9 609.7,623.3 610.8,622.1 611.9,622.9 612.8,622.2 613.9,623.5 614.9,621.7 615.9,623.1 617.3,621.8 618.5,622.9 619.7,622.1 621.1,623.0 622.2,621.8 623.2,623.1 624.5,621.9 625.5,622.8 626.4,621.8 627.5,623.3 628.9,622.1 630.0,623.5 631.2,622.2 632.6,623.0 633.6,622.4 635.0,623.4 636.3,621.7 637.2,623.0 638.4,621.7 639.8,623.1 640.9,622.1 642.1,623.5 643.1,621.8 644.4,623.4 645.8,622.0 646.9,623.0 648.0,621.8 649.0,623.0 650.3,622.2 651.3,622.8 652.5,622.2 654.0,623.4 655.5,622.2 656.4,622.9 657.6,621.9 658.8,623.0 659.9,622.0 661.2,623.3 662.6,621.9 663.6,623.4 664.7,622.0 665.8,623.3 666.8,622.2 667.9,622.9 669.3,622.0 670.4,623.1 671.9,622.0 672.9,623.4 674.2,621.7 675.2,623.1 676.6,621.8 678.0,622.9 679.1,622.3 680.1,623.5 681.4,621.7 682.5,623.4 683.7,622.2 685.0,623.5 686.0,622.0 687.3,623.0 688.4,622.3 689.4,623.0 690.7,621.9 691.7,622.8 692.8,621.9 693.8,623.0 694.8,621.8 696.1,622.9 697.0,622.1 698.2,623.3 699.2,622.3 700.5,622.9 701.6,622.4 703.1,622.8 704.3,622.3 705.5,623.0 707.0,622.3 708.0,623.0 709.0,622.5 710.4,622.9 711.8,622.3 713.3,622.9 714.3,622.5 715.5,623.0 716.9,622.4 718.2,622.9 719.4,622.4 720.5,622.9 721.9,622.4 723.1,623.0 724.6,622.4 725.6,623.1 727.1,622.3 728.0,623.1 729.1,622.1 730.4,623.0 731.4,622.2 732.4,622.9 733.8,622.2 734.8,622.8 736.0,622.3 737.1,622.8 738.2,622.2 739.6,622.7 740.8,622.2 741.8,623.0 742.7,622.3 744.0,623.0 745.1,622.3 746.3,622.9 747.6,622.3 748.8,622.7 750.0,622.3 751.1,623.0 752.4,622.3 753.4,622.9 754.4,622.4 755.6,622.8 756.7,622.3 757.7,623.0 758.6,622.2 760.0,622.9 760.0,622.6 1008.0,622.6" fill="none" stroke="#f2f3f4" stroke-width="1.15" stroke-linejoin="round"/><line x1="134" x2="1008" y1="622.6" y2="622.6" stroke="#e8eaec" stroke-width="1.1"/></svg>
<div style="left:134.60px;top:674.60px;width:2.40px;height:3.60px;background:#c020c8;"></div>
<span class="b" style="color:#c818c8;transform:translate(966.00px,566.07px) scale(0.2865,0.2332) rotate(0.1deg);">0000 / 282C0</span>
<div style="left:133.00px;top:679.60px;width:876.50px;height:7.00px;background:linear-gradient(#2d3031,#232626);"></div>
<div style="left:133.00px;top:680.00px;width:6.40px;height:6.40px;background:linear-gradient(#333737,#262929);box-shadow:inset 0.7px 0.7px 0 #454a4a,inset -0.7px -0.7px 0 #0c0d0d;"></div>
<div style="left:1001.40px;top:680.00px;width:6.40px;height:6.40px;background:linear-gradient(#333737,#262929);box-shadow:inset 0.7px 0.7px 0 #454a4a,inset -0.7px -0.7px 0 #0c0d0d;"></div>
<svg style="left:132px;top:679px" width="880" height="9" viewBox="132 679 880 9"><polygon points="134.6,683.2 137.6,681 137.6,685.4" fill="#050505"/><polygon points="1006.4,683.2 1003.4,681 1003.4,685.4" fill="#050505"/></svg>
<div style="left:133.00px;top:688.00px;width:876.50px;height:32.00px;background:#1c1f1f;"></div>
<span class="b" style="color:#d8d8d8;transform:translate(134.00px,689.66px) scale(0.4427,0.3292) rotate(0.1deg);">Play:</span>
<span class="b" style="color:#d8d8d8;transform:translate(137.00px,702.46px) scale(0.4427,0.3292) rotate(0.1deg);">C-4</span>
<div style="left:134.40px;top:714.20px;width:47.60px;height:10.20px;background:linear-gradient(#333737,#262929);box-shadow:inset 0.7px 0.7px 0 #454a4a,inset -0.7px -0.7px 0 #0c0d0d;"></div>
<span class="b" style="color:#e6e6e6;transform:translate(147.54px,716.92px) scale(0.4427,0.3224) rotate(0.1deg);">Stop</span>
<div style="left:184.00px;top:702.60px;width:24.60px;height:10.20px;background:linear-gradient(#333737,#262929);box-shadow:inset 0.7px 0.7px 0 #454a4a,inset -0.7px -0.7px 0 #0c0d0d;"></div>
<span class="b" style="color:#e6e6e6;transform:translate(190.97px,705.32px) scale(0.4427,0.3224) rotate(0.1deg);">Up</span>
<div style="left:184.00px;top:714.20px;width:24.60px;height:10.20px;background:linear-gradient(#333737,#262929);box-shadow:inset 0.7px 0.7px 0 #454a4a,inset -0.7px -0.7px 0 #0c0d0d;"></div>
<span class="b" style="color:#e6e6e6;transform:translate(190.97px,716.92px) scale(0.4427,0.3224) rotate(0.1deg);">Dn</span>
<div style="left:211.00px;top:690.80px;width:38.00px;height:10.40px;background:linear-gradient(#333737,#262929);box-shadow:inset 0.7px 0.7px 0 #454a4a,inset -0.7px -0.7px 0 #0c0d0d;"></div>
<span class="b" style="color:#e6e6e6;transform:translate(222.00px,693.62px) scale(0.4427,0.3224) rotate(0.1deg);">Wav</span>
<div style="left:211.00px;top:702.60px;width:38.00px;height:10.20px;background:linear-gradient(#333737,#262929);box-shadow:inset 0.7px 0.7px 0 #454a4a,inset -0.7px -0.7px 0 #0c0d0d;"></div>
<span class="b" style="color:#e6e6e6;transform:translate(222.00px,705.32px) scale(0.4427,0.3224) rotate(0.1deg);">Rng</span>
<div style="left:211.00px;top:714.20px;width:38.00px;height:10.20px;background:linear-gradient(#333737,#262929);box-shadow:inset 0.7px 0.7px 0 #454a4a,inset -0.7px -0.7px 0 #0c0d0d;"></div>
<span class="b" style="color:#e6e6e6;transform:translate(222.00px,716.92px) scale(0.4427,0.3224) rotate(0.1deg);">Drp</span>
<div style="left:252.60px;top:690.80px;width:92.00px;height:10.40px;background:linear-gradient(#333737,#262929);box-shadow:inset 0.7px 0.7px 0 #454a4a,inset -0.7px -0.7px 0 #0c0d0d;"></div>
<span class="b" style="color:#e6e6e6;transform:translate(277.28px,693.62px) scale(0.4427,0.3224) rotate(0.1deg);">Show rng</span>
<div style="left:252.60px;top:702.60px;width:92.00px;height:10.20px;background:linear-gradient(#333737,#262929);box-shadow:inset 0.7px 0.7px 0 #454a4a,inset -0.7px -0.7px 0 #0c0d0d;"></div>
<span class="b" style="color:#e6e6e6;transform:translate(279.95px,705.32px) scale(0.4427,0.3224) rotate(0.1deg);">Rng all</span>
<div style="left:252.60px;top:714.20px;width:45.40px;height:10.20px;background:linear-gradient(#333737,#262929);box-shadow:inset 0.7px 0.7px 0 #454a4a,inset -0.7px -0.7px 0 #0c0d0d;"></div>
<span class="b" style="color:#e6e6e6;transform:translate(264.64px,716.92px) scale(0.4427,0.3224) rotate(0.1deg);">Undo</span>
<div style="left:299.00px;top:714.20px;width:45.60px;height:10.20px;background:linear-gradient(#333737,#262929);box-shadow:inset 0.7px 0.7px 0 #454a4a,inset -0.7px -0.7px 0 #0c0d0d;"></div>
<span class="b" style="color:#6e7272;transform:translate(311.14px,716.92px) scale(0.4427,0.3224) rotate(0.1deg);">Redo</span>
<div style="left:345.80px;top:690.80px;width:92.20px;height:10.40px;background:linear-gradient(#333737,#262929);box-shadow:inset 0.7px 0.7px 0 #454a4a,inset -0.7px -0.7px 0 #0c0d0d;"></div>
<span class="b" style="color:#6e7272;transform:translate(370.58px,693.62px) scale(0.4427,0.3224) rotate(0.1deg);">Zoom out</span>
<div style="left:345.80px;top:702.60px;width:92.20px;height:10.20px;background:linear-gradient(#333737,#262929);box-shadow:inset 0.7px 0.7px 0 #454a4a,inset -0.7px -0.7px 0 #0c0d0d;"></div>
<span class="b" style="color:#e6e6e6;transform:translate(370.58px,705.32px) scale(0.4427,0.3224) rotate(0.1deg);">Show all</span>
<div style="left:345.80px;top:714.20px;width:92.20px;height:10.20px;background:linear-gradient(#333737,#262929);box-shadow:inset 0.7px 0.7px 0 #454a4a,inset -0.7px -0.7px 0 #0c0d0d;"></div>
<span class="b" style="color:#6e7272;transform:translate(362.58px,716.92px) scale(0.4427,0.3224) rotate(0.1deg);">Redo filter</span>
<div style="left:442.00px;top:690.80px;width:60.40px;height:10.40px;background:linear-gradient(#333737,#262929);box-shadow:inset 0.7px 0.7px 0 #454a4a,inset -0.7px -0.7px 0 #0c0d0d;"></div>
<span class="b" style="color:#e6e6e6;transform:translate(464.20px,693.62px) scale(0.4427,0.3224) rotate(0.1deg);">Cut</span>
<div style="left:442.00px;top:702.60px;width:60.40px;height:10.20px;background:linear-gradient(#333737,#262929);box-shadow:inset 0.7px 0.7px 0 #454a4a,inset -0.7px -0.7px 0 #0c0d0d;"></div>
<span class="b" style="color:#e6e6e6;transform:translate(461.54px,705.32px) scale(0.4427,0.3224) rotate(0.1deg);">Copy</span>
<div style="left:442.00px;top:714.20px;width:60.40px;height:10.20px;background:linear-gradient(#333737,#262929);box-shadow:inset 0.7px 0.7px 0 #454a4a,inset -0.7px -0.7px 0 #0c0d0d;"></div>
<span class="b" style="color:#e6e6e6;transform:translate(458.88px,716.92px) scale(0.4427,0.3224) rotate(0.1deg);">Paste</span>
<div style="left:506.00px;top:690.80px;width:62.60px;height:10.40px;background:linear-gradient(#333737,#262929);box-shadow:inset 0.7px 0.7px 0 #454a4a,inset -0.7px -0.7px 0 #0c0d0d;"></div>
<span class="b" style="color:#e6e6e6;transform:translate(526.64px,693.62px) scale(0.4427,0.3224) rotate(0.1deg);">Crop</span>
<div style="left:506.00px;top:702.60px;width:62.60px;height:10.20px;background:linear-gradient(#333737,#262929);box-shadow:inset 0.7px 0.7px 0 #454a4a,inset -0.7px -0.7px 0 #0c0d0d;"></div>
<span class="b" style="color:#e6e6e6;transform:translate(529.30px,705.32px) scale(0.4427,0.3224) rotate(0.1deg);">Vol</span>
<div style="left:506.00px;top:714.20px;width:62.60px;height:10.20px;background:linear-gradient(#333737,#262929);box-shadow:inset 0.7px 0.7px 0 #454a4a,inset -0.7px -0.7px 0 #0c0d0d;"></div>
<span class="b" style="color:#e6e6e6;transform:translate(526.64px,716.92px) scale(0.4427,0.3224) rotate(0.1deg);">Draw</span>
<div style="left:571.00px;top:689.20px;width:112.00px;height:30.80px;background:#1f2323;box-shadow:inset 0.7px 0.7px 0 #0c0d0d;"></div>
<span class="b" style="color:#e0e0e0;transform:translate(580.60px,690.06px) scale(0.4427,0.3292) rotate(0.1deg);">No loop</span>
<span class="b" style="color:#e8e8e8;transform:translate(573.60px,690.24px) scale(0.3654,0.2469) rotate(0.1deg);">◆</span>
<span class="b" style="color:#e0e0e0;transform:translate(580.60px,699.11px) scale(0.4427,0.3292) rotate(0.1deg);">Forward</span>
<span class="b" style="color:#0e1010;transform:translate(573.60px,699.29px) scale(0.3654,0.2469) rotate(0.1deg);">◆</span>
<span class="b" style="color:#e0e0e0;transform:translate(580.60px,708.16px) scale(0.4427,0.3292) rotate(0.1deg);">Ping-pong</span>
<span class="b" style="color:#0e1010;transform:translate(573.60px,708.34px) scale(0.3654,0.2469) rotate(0.1deg);">◆</span>
<span class="b" style="color:#e0e0e0;transform:translate(580.60px,717.21px) scale(0.4427,0.3292) rotate(0.1deg);">One shot</span>
<span class="b" style="color:#0e1010;transform:translate(573.60px,717.39px) scale(0.3654,0.2469) rotate(0.1deg);">◆</span>
<div style="left:684.00px;top:689.20px;width:89.00px;height:30.80px;background:#1f2323;box-shadow:inset 0.7px 0.7px 0 #0c0d0d;"></div>
<span class="b" style="color:#e0e0e0;transform:translate(693.20px,690.06px) scale(0.4427,0.3292) rotate(0.1deg);">8-bit</span>
<span class="b" style="color:#e0e0e0;transform:translate(693.20px,699.11px) scale(0.4427,0.3292) rotate(0.1deg);">16-bit</span>
<span class="b" style="color:#e8e8e8;transform:translate(686.80px,699.29px) scale(0.3654,0.2469) rotate(0.1deg);">◆</span>
<span class="b" style="color:#0e1010;transform:translate(686.80px,690.24px) scale(0.3654,0.2469) rotate(0.1deg);">◆</span>
<div style="left:685.20px;top:708.80px;width:42.20px;height:9.60px;background:linear-gradient(#333737,#262929);box-shadow:inset 0.7px 0.7px 0 #454a4a,inset -0.7px -0.7px 0 #0c0d0d;"></div>
<span class="b" style="color:#e6e6e6;transform:translate(695.64px,711.22px) scale(0.4427,0.3224) rotate(0.1deg);">Load</span>
<div style="left:728.80px;top:708.80px;width:42.60px;height:9.60px;background:linear-gradient(#333737,#262929);box-shadow:inset 0.7px 0.7px 0 #454a4a,inset -0.7px -0.7px 0 #0c0d0d;"></div>
<span class="b" style="color:#e6e6e6;transform:translate(739.44px,711.22px) scale(0.4427,0.3224) rotate(0.1deg);">Save</span>
<div style="left:685.20px;top:719.60px;width:86.20px;height:9.40px;background:linear-gradient(#333737,#262929);box-shadow:inset 0.7px 0.7px 0 #454a4a,inset -0.7px -0.7px 0 #0c0d0d;"></div>
<span class="b" style="color:#e0e0e0;transform:translate(776.80px,690.66px) scale(0.4427,0.3292) rotate(0.1deg);">Display</span>
<span class="b" style="color:#c8c8c8;transform:translate(931.00px,690.66px) scale(0.4427,0.3292) rotate(0.1deg);">000282C0</span>
<span class="b" style="color:#e0e0e0;transform:translate(776.80px,699.66px) scale(0.4427,0.3292) rotate(0.1deg);">Length</span>
<span class="b" style="color:#c8c8c8;transform:translate(931.00px,699.66px) scale(0.4427,0.3292) rotate(0.1deg);">000282C0</span>
<span class="b" style="color:#e0e0e0;transform:translate(776.80px,708.66px) scale(0.4427,0.3292) rotate(0.1deg);">Repeat</span>
<span class="b" style="color:#c8c8c8;transform:translate(931.00px,708.66px) scale(0.4427,0.3292) rotate(0.1deg);">00000000</span>
<span class="b" style="color:#e0e0e0;transform:translate(776.80px,717.66px) scale(0.4427,0.3292) rotate(0.1deg);">Replen</span>
<span class="b" style="color:#c8c8c8;transform:translate(931.00px,717.66px) scale(0.4427,0.3292) rotate(0.1deg);">00000000</span>
<div style="left:977.60px;top:690.00px;width:29.80px;height:9.20px;background:linear-gradient(#333737,#262929);box-shadow:inset 0.7px 0.7px 0 #454a4a,inset -0.7px -0.7px 0 #0c0d0d;"></div>
<span class="b" style="color:#e6e6e6;transform:translate(979.17px,692.22px) scale(0.4427,0.3224) rotate(0.1deg);">Clear</span>
<div style="left:977.60px;top:699.80px;width:20.40px;height:8.60px;background:linear-gradient(#333737,#262929);box-shadow:inset 0.7px 0.7px 0 #454a4a,inset -0.7px -0.7px 0 #0c0d0d;"></div>
<span class="b" style="color:#e6e6e6;transform:translate(979.80px,701.72px) scale(0.4427,0.3224) rotate(0.1deg);">Min</span>
<div style="left:998.80px;top:699.80px;width:8.60px;height:8.60px;background:linear-gradient(#333737,#262929);box-shadow:inset 0.7px 0.7px 0 #454a4a,inset -0.7px -0.7px 0 #0c0d0d;"></div>
<span class="b" style="color:#e6e6e6;transform:translate(1000.43px,701.72px) scale(0.4427,0.3224) rotate(0.1deg);">H</span>
<div style="left:977.60px;top:709.00px;width:10.00px;height:8.40px;background:linear-gradient(#333737,#262929);box-shadow:inset 0.7px 0.7px 0 #454a4a,inset -0.7px -0.7px 0 #0c0d0d;"></div>
<span class="b" style="color:#e6e6e6;transform:translate(979.94px,709.82px) scale(0.4427,0.3224) rotate(0.1deg);">+</span>
<div style="left:988.40px;top:709.00px;width:9.60px;height:8.40px;background:linear-gradient(#333737,#262929);box-shadow:inset 0.7px 0.7px 0 #454a4a,inset -0.7px -0.7px 0 #0c0d0d;"></div>
<span class="b" style="color:#e6e6e6;transform:translate(990.54px,709.82px) scale(0.4427,0.3224) rotate(0.1deg);">−</span>
<div style="left:1000.40px;top:709.00px;width:6.20px;height:17.00px;background:linear-gradient(#333737,#262929);box-shadow:inset 0.7px 0.7px 0 #454a4a,inset -0.7px -0.7px 0 #0c0d0d;"></div>
<div style="left:977.60px;top:718.00px;width:10.00px;height:8.00px;background:linear-gradient(#333737,#262929);box-shadow:inset 0.7px 0.7px 0 #454a4a,inset -0.7px -0.7px 0 #0c0d0d;"></div>
<div style="left:988.40px;top:718.00px;width:9.60px;height:8.00px;background:linear-gradient(#333737,#262929);box-shadow:inset 0.7px 0.7px 0 #454a4a,inset -0.7px -0.7px 0 #0c0d0d;"></div>
</div></body></html>
